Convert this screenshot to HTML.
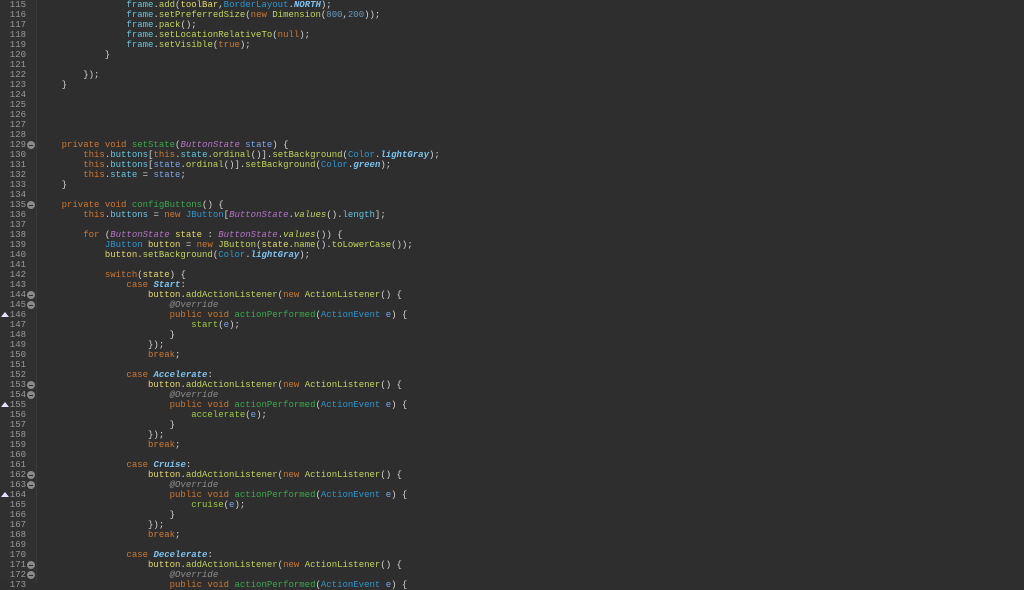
<!DOCTYPE html>
<html><head><meta charset="utf-8"><style>
html,body{margin:0;padding:0;width:1024px;height:583px;overflow:hidden;background:#2e2e2e}
#g{position:absolute;left:0;top:0;width:36px;height:583px;background:#303030;border-right:1px solid #3a3a3a}
.ln{position:absolute;left:0;width:26px;text-align:right;font:9px/10px "Liberation Mono",monospace;color:#9a9a9a}
#c{position:absolute;left:40px;top:0;font:9px/10px "Liberation Mono",monospace;color:#d4d4d4;white-space:pre}
.fold{position:absolute;left:27px;width:8px;height:8px;border-radius:50%;background:#8a8a8a}
.fold:after{content:"";position:absolute;left:2px;top:3.5px;width:4px;height:1px;background:#2e2e2e}
.tri{position:absolute;left:1px;width:0;height:0;border-left:4px solid transparent;border-right:4px solid transparent;border-bottom:5px solid #e8e0ff}
.k{color:#cc7832}.f{color:#66c4de}.p{color:#7aa6ec}.m{color:#bfd55a}.v{color:#e3d86c}.t{color:#2d95cc}
.s{color:#7ec3f0;font-style:italic;font-weight:bold}.e{color:#b472c6;font-style:italic}.i{color:#bfd55a;font-style:italic}
.d{color:#3aa84c}.n{color:#6897bb}.a{color:#8c8c8c;font-style:italic}.g{color:#9ccc3c}
</style></head><body>
<div id="g"></div>
<div class="ln" style="top:0">115<br>116<br>117<br>118<br>119<br>120<br>121<br>122<br>123<br>124<br>125<br>126<br>127<br>128<br>129<br>130<br>131<br>132<br>133<br>134<br>135<br>136<br>137<br>138<br>139<br>140<br>141<br>142<br>143<br>144<br>145<br>146<br>147<br>148<br>149<br>150<br>151<br>152<br>153<br>154<br>155<br>156<br>157<br>158<br>159<br>160<br>161<br>162<br>163<br>164<br>165<br>166<br>167<br>168<br>169<br>170<br>171<br>172<br>173</div>
<div class="fold" style="top:141px"></div><div class="fold" style="top:201px"></div>
<div class="fold" style="top:291px"></div><div class="fold" style="top:301px"></div><div class="tri" style="top:312px"></div>
<div class="fold" style="top:381px"></div><div class="fold" style="top:391px"></div><div class="tri" style="top:402px"></div>
<div class="fold" style="top:471px"></div><div class="fold" style="top:481px"></div><div class="tri" style="top:492px"></div>
<div class="fold" style="top:561px"></div><div class="fold" style="top:571px"></div>
<div id="c">                <span class="f">frame</span>.<span class="m">add</span>(<span class="v">toolBar</span>,<span class="t">BorderLayout</span>.<span class="s">NORTH</span>);
                <span class="f">frame</span>.<span class="m">setPreferredSize</span>(<span class="k">new</span> <span class="m">Dimension</span>(<span class="n">800</span>,<span class="n">200</span>));
                <span class="f">frame</span>.<span class="m">pack</span>();
                <span class="f">frame</span>.<span class="m">setLocationRelativeTo</span>(<span class="k">null</span>);
                <span class="f">frame</span>.<span class="m">setVisible</span>(<span class="k">true</span>);
            }

        });
    }





    <span class="k">private void</span> <span class="d">setState</span>(<span class="e">ButtonState</span> <span class="p">state</span>) {
        <span class="k">this</span>.<span class="f">buttons</span>[<span class="k">this</span>.<span class="f">state</span>.<span class="m">ordinal</span>()].<span class="m">setBackground</span>(<span class="t">Color</span>.<span class="s">lightGray</span>);
        <span class="k">this</span>.<span class="f">buttons</span>[<span class="p">state</span>.<span class="m">ordinal</span>()].<span class="m">setBackground</span>(<span class="t">Color</span>.<span class="s">green</span>);
        <span class="k">this</span>.<span class="f">state</span> = <span class="p">state</span>;
    }

    <span class="k">private void</span> <span class="d">configButtons</span>() {
        <span class="k">this</span>.<span class="f">buttons</span> = <span class="k">new</span> <span class="t">JButton</span>[<span class="e">ButtonState</span>.<span class="i">values</span>().<span class="f">length</span>];

        <span class="k">for</span> (<span class="e">ButtonState</span> <span class="v">state</span> : <span class="e">ButtonState</span>.<span class="i">values</span>()) {
            <span class="t">JButton</span> <span class="v">button</span> = <span class="k">new</span> <span class="m">JButton</span>(<span class="v">state</span>.<span class="m">name</span>().<span class="m">toLowerCase</span>());
            <span class="v">button</span>.<span class="m">setBackground</span>(<span class="t">Color</span>.<span class="s">lightGray</span>);

            <span class="k">switch</span>(<span class="v">state</span>) {
                <span class="k">case</span> <span class="s">Start</span>:
                    <span class="v">button</span>.<span class="m">addActionListener</span>(<span class="k">new</span> <span class="m">ActionListener</span>() {
                        <span class="a">@Override</span>
                        <span class="k">public void</span> <span class="d">actionPerformed</span>(<span class="t">ActionEvent</span> <span class="p">e</span>) {
                            <span class="g">start</span>(<span class="p">e</span>);
                        }
                    });
                    <span class="k">break</span>;

                <span class="k">case</span> <span class="s">Accelerate</span>:
                    <span class="v">button</span>.<span class="m">addActionListener</span>(<span class="k">new</span> <span class="m">ActionListener</span>() {
                        <span class="a">@Override</span>
                        <span class="k">public void</span> <span class="d">actionPerformed</span>(<span class="t">ActionEvent</span> <span class="p">e</span>) {
                            <span class="g">accelerate</span>(<span class="p">e</span>);
                        }
                    });
                    <span class="k">break</span>;

                <span class="k">case</span> <span class="s">Cruise</span>:
                    <span class="v">button</span>.<span class="m">addActionListener</span>(<span class="k">new</span> <span class="m">ActionListener</span>() {
                        <span class="a">@Override</span>
                        <span class="k">public void</span> <span class="d">actionPerformed</span>(<span class="t">ActionEvent</span> <span class="p">e</span>) {
                            <span class="g">cruise</span>(<span class="p">e</span>);
                        }
                    });
                    <span class="k">break</span>;

                <span class="k">case</span> <span class="s">Decelerate</span>:
                    <span class="v">button</span>.<span class="m">addActionListener</span>(<span class="k">new</span> <span class="m">ActionListener</span>() {
                        <span class="a">@Override</span>
                        <span class="k">public void</span> <span class="d">actionPerformed</span>(<span class="t">ActionEvent</span> <span class="p">e</span>) {</div>
</body></html>
